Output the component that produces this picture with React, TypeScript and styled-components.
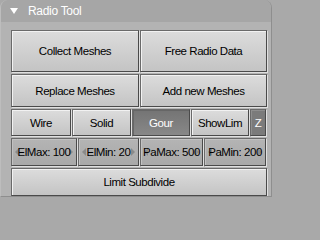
import React from 'react'
import styled, { createGlobalStyle, css } from 'styled-components'

const Global = createGlobalStyle`
    html, body {
        margin: 0;
        padding: 0;
        background: #a9a9a9;
    }
    body {
        width: 275px;
        height: 201px;
        overflow: hidden;
        font-family: "Liberation Sans", Arial, sans-serif;
    }
`

const Panel = styled.div`
    width: 272px;
    height: 197px;
    box-sizing: border-box;
    background: #b3b3b3;
    border-left: 1px solid #bdbdbd;
    border-right: 1px solid #8e8e8e;
    border-bottom: 1px solid #8e8e8e;
    border-radius: 8px 8px 0 0;
    overflow: hidden;
`

const Header = styled.div`
    height: 22px;
    display: flex;
    align-items: center;
    gap: 10px;
    padding-left: 9px;
    background: #a6a6a6;
    color: #ffffff;
    font-size: 12px;
    letter-spacing: -0.3px;
`

const Body = styled.div`
    display: flex;
    flex-direction: column;
    gap: 2px;
    padding: 8px 5px 0 10px;
`

const Row = styled.div<{ $cols: string; $h: number }>`
    display: grid;
    grid-template-columns: ${p => p.$cols};
    height: ${p => p.$h}px;
    gap: 1px;
`

const Button = styled.div<{ $kind?: 'plain' | 'pressed' | 'dark' | 'num' }>`
    position: relative;
    box-sizing: border-box;
    display: flex;
    align-items: center;
    justify-content: center;
    font-size: 11.5px;
    letter-spacing: -0.45px;
    color: #000;
    white-space: nowrap;
    overflow: hidden;
    border: 1px solid #4a4a4a;
    border-top-color: #6a6a6a;
    border-left-color: #6a6a6a;
    box-shadow: inset 1px 1px 0 #f2f2f2, 1px 1px 0 #e0e0e0;
    background: linear-gradient(#dcdcdc, #c4c4c4);
    ${p => p.$kind === 'pressed' && css`
        color: #fff;
        background: linear-gradient(#747474, #888888);
        box-shadow: inset 1px 1px 0 #666, 1px 1px 0 #e0e0e0;
    `}
    ${p => p.$kind === 'dark' && css`
        color: #fff;
        background: #7b7b7b;
        box-shadow: inset 1px 1px 0 #8e8e8e, 1px 1px 0 #e0e0e0;
    `}
    ${p => p.$kind === 'num' && css`
        background: linear-gradient(#b4b4b4, #a9a9a9);
        box-shadow: inset 1px 1px 0 #c2c2c2, 1px 1px 0 #e0e0e0;
    `}
`

const Arrow = styled.svg<{ $side: 'left' | 'right' }>`
    position: absolute;
    top: 50%;
    margin-top: -4px;
    ${p => (p.$side === 'left' ? 'left: 3px;' : 'right: 3px;')}
`

const Label = styled.span`
    position: relative;
`

const Num: React.FC<{ text: string }> = ({ text }) => (
    <Button $kind="num">
        <Arrow $side="left" width="4" height="8" viewBox="0 0 4 8">
            <polygon points="4,0 0,4 4,8" fill="#8a8a8a" />
        </Arrow>
        <Arrow $side="right" width="4" height="8" viewBox="0 0 4 8">
            <polygon points="0,0 4,4 0,8" fill="#8a8a8a" />
        </Arrow>
        <Label>{text}</Label>
    </Button>
)

export default function App() {
    return (
        <>
            <Global />
            <Panel>
                <Header>
                    <svg width="8" height="6" viewBox="0 0 8 6">
                        <polygon points="0,0 8,0 4,6" fill="#fff" />
                    </svg>
                    Radio Tool
                </Header>
                <Body>
                    <Row $cols="128px 127px" $h={42}>
                        <Button>Collect Meshes</Button>
                        <Button>Free Radio Data</Button>
                    </Row>
                    <Row $cols="128px 127px" $h={33}>
                        <Button>Replace Meshes</Button>
                        <Button>Add new Meshes</Button>
                    </Row>
                    <Row $cols="60px 59px 58px 58px 16px" $h={27}>
                        <Button>Wire</Button>
                        <Button>Solid</Button>
                        <Button $kind="pressed">Gour</Button>
                        <Button>ShowLim</Button>
                        <Button $kind="dark">Z</Button>
                    </Row>
                    <Row $cols="66px 61px 63px 62px" $h={28}>
                        <Num text="ElMax: 100" />
                        <Num text="ElMin: 20" />
                        <Num text="PaMax: 500" />
                        <Num text="PaMin: 200" />
                    </Row>
                    <Row $cols="256px" $h={28}>
                        <Button>Limit Subdivide</Button>
                    </Row>
                </Body>
            </Panel>
        </>
    )
}
